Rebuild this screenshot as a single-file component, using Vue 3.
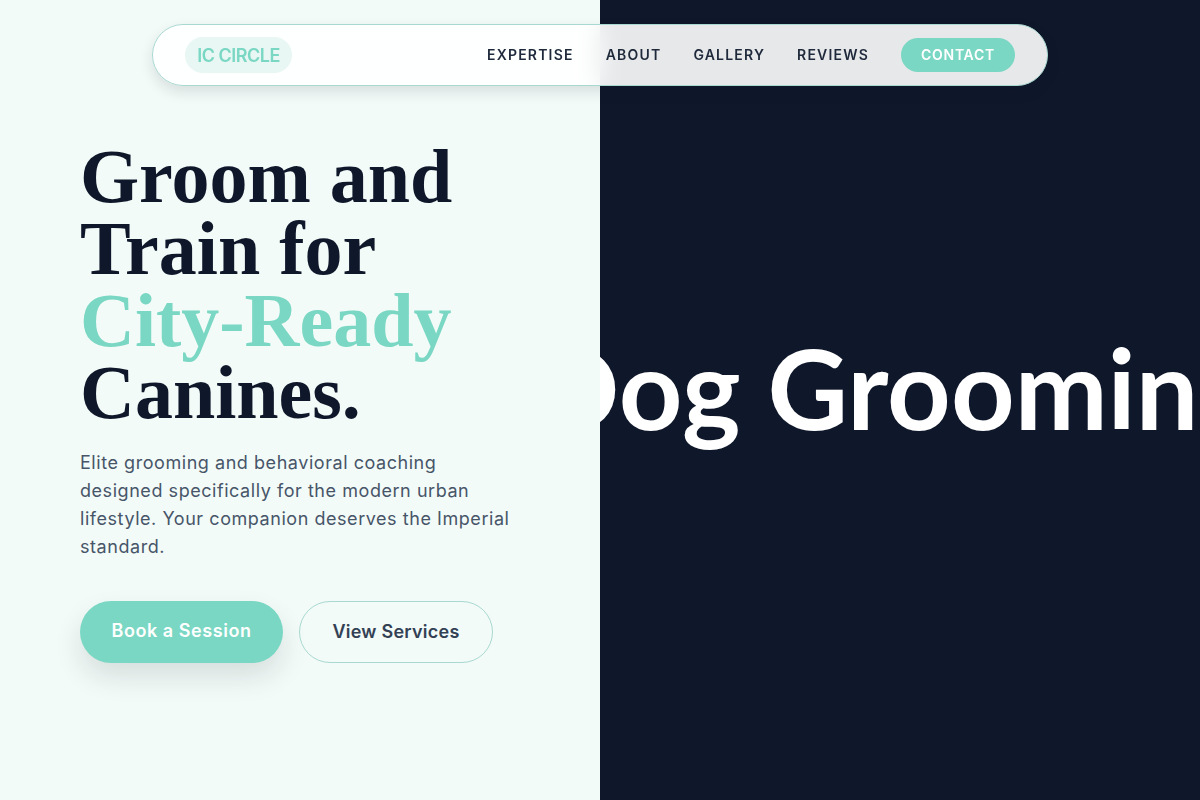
<script setup>
const links = ['EXPERTISE', 'ABOUT', 'GALLERY', 'REVIEWS']
</script>

<template>
  <div class="page">
    <header class="nav">
      <span class="logo">IC CIRCLE</span>
      <nav class="links">
        <a v-for="link in links" :key="link" class="link">{{ link }}</a>
        <a class="contact">CONTACT</a>
      </nav>
    </header>
    <section class="left">
      <h1 class="title">Groom and<br />Train for<br /><span class="accent">City-Ready</span><br />Canines.</h1>
      <p class="lead">Elite grooming and behavioral coaching<br />designed specifically for the modern urban<br />lifestyle. Your companion deserves the Imperial<br />standard.</p>
      <div class="actions">
        <a class="btn primary">Book a Session</a>
        <a class="btn ghost">View Services</a>
      </div>
    </section>
    <section class="right">
      <span class="alt">Dog Grooming</span>
    </section>
  </div>
</template>

<style>
html, body { margin: 0; }
</style>

<style scoped>
.page {
  position: relative;
  display: grid;
  grid-template-columns: 600px 600px;
  width: 1200px;
  height: 800px;
  overflow: hidden;
  font-family: "Inter", "Liberation Sans", sans-serif;
}
.nav {
  position: absolute;
  top: 24px;
  left: 152px;
  z-index: 2;
  box-sizing: border-box;
  width: 896px;
  height: 62px;
  padding: 0 32px;
  display: flex;
  align-items: center;
  justify-content: space-between;
  border: 1px solid #a8d8d0;
  border-radius: 32px;
  background: rgba(255, 255, 255, 0.9);
  backdrop-filter: blur(12px);
  box-shadow: 0 6px 14px rgba(15, 23, 42, 0.12);
}
.logo {
  box-sizing: border-box;
  width: 107px;
  height: 36px;
  display: flex;
  align-items: center;
  justify-content: center;
  border-radius: 18px;
  background: #e8f7f3;
  color: #7ad7c3;
  font-size: 18px;
  font-weight: 600;
  letter-spacing: -0.5px;
}
.links {
  display: flex;
  align-items: center;
  gap: 32px;
}
.link {
  padding-bottom: 2px;
  color: #1e293b;
  font-size: 14px;
  font-weight: 600;
  letter-spacing: 1.2px;
}
.contact {
  box-sizing: border-box;
  width: 114px;
  height: 34px;
  padding-bottom: 1px;
  display: flex;
  align-items: center;
  justify-content: center;
  border-radius: 17px;
  background: #7ad7c3;
  color: #fff;
  font-size: 14px;
  font-weight: 600;
  letter-spacing: 0.7px;
}
.left {
  background: #f3fbf8;
  padding: 0 80px;
  display: flex;
  flex-direction: column;
  justify-content: center;
}
.title {
  margin: 0 0 21px;
  padding-top: 3px;
  color: #0f172a;
  font-family: "Liberation Serif", serif;
  font-size: 76px;
  font-weight: 700;
  line-height: 72px;
}
.accent { color: #7ad7c3; }
.lead {
  margin: 0 0 40px;
  color: #475569;
  font-size: 18px;
  line-height: 28px;
  letter-spacing: 0.55px;
  white-space: nowrap;
}
.actions {
  display: flex;
  gap: 16px;
}
.btn {
  box-sizing: border-box;
  height: 62px;
  padding-bottom: 2px;
  display: flex;
  align-items: center;
  justify-content: center;
  border-radius: 31px;
  font-size: 18px;
  font-weight: 600;
}
.primary {
  width: 203px;
  padding-bottom: 3px;
  background: #7ad7c3;
  color: #fff;
  letter-spacing: 0.55px;
  box-shadow: 0 14px 28px rgba(15, 23, 42, 0.12);
}
.ghost {
  width: 194px;
  border: 1px solid #a8d8d0;
  color: #334155;
  letter-spacing: 0.25px;
}
.right {
  box-sizing: border-box;
  padding: 0 8px 26px 0;
  background: #0f172a;
  overflow: hidden;
  display: flex;
  align-items: center;
  justify-content: center;
}
.alt {
  flex: none;
  color: #fff;
  font-family: "Lato", sans-serif;
  font-size: 111px;
  font-weight: 700;
  white-space: nowrap;
}
</style>
